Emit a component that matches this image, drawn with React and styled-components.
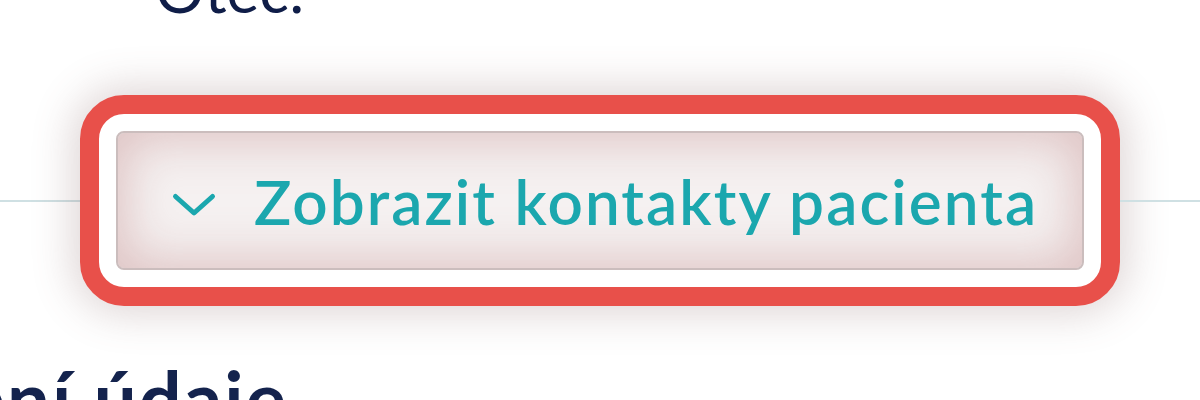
import React from 'react';
import styled, { createGlobalStyle } from 'styled-components';

const GlobalStyle = createGlobalStyle`
  html, body {
    margin: 0;
    padding: 0;
    background: #ffffff;
    overflow: hidden;
  }
  body {
    font-family: Lato, "Noto Sans", sans-serif;
  }
`;

const App = () => (
  <Page>
    <GlobalStyle />
    <FieldValue>Otec:</FieldValue>
    <DividerRow>
      <Rule />
      <FocusRing>
        <ToggleButton type="button">
          <Chevron width="46" height="26" viewBox="0 0 46 26" aria-hidden="true">
            <polyline points="4.5,4.5 23,21 41.5,4.5" />
          </Chevron>
          <ToggleLabel>Zobrazit kontakty pacienta</ToggleLabel>
        </ToggleButton>
      </FocusRing>
      <Rule />
    </DividerRow>
    <SectionTitle>Osobní údaje</SectionTitle>
  </Page>
);

export default App;

const Page = styled.div`
  width: 1200px;
  height: 400px;
  overflow: hidden;
  background: #ffffff;
`;

const FieldValue = styled.div`
  margin: -48px 0 0 155px;
  font-size: 62px;
  line-height: 1.2;
  font-weight: 400;
  color: #0f1d48;
`;

const DividerRow = styled.div`
  display: flex;
  align-items: center;
  margin-top: 69px;
`;

const Rule = styled.div`
  flex: 1;
  height: 2px;
  background: #cfe0e3;
`;

const FocusRing = styled.div`
  flex: none;
  padding: 17px;
  border: 19px solid #e8504a;
  border-radius: 44px;
  background: #ffffff;
  box-shadow: 0 0 40px 8px rgba(120, 85, 85, 0.24);
`;

const ToggleButton = styled.button`
  display: flex;
  align-items: center;
  gap: 37px;
  width: 968px;
  height: 139px;
  padding: 0 0 0 53px;
  border: 2px solid #cbbdbd;
  border-radius: 8px;
  background: #f5f1f1;
  box-shadow: inset 0 0 48px 8px rgba(196, 140, 140, 0.45);
  cursor: pointer;
  font-family: inherit;
`;

const Chevron = styled.svg`
  flex: none;
  fill: none;
  stroke: #1ba7ae;
  stroke-width: 5;
  stroke-linecap: round;
  stroke-linejoin: round;
  margin-top: 8px;
`;

const ToggleLabel = styled.span`
  font-size: 62px;
  font-weight: 600;
  letter-spacing: 2.1px;
  color: #1ba7ae;
  white-space: nowrap;
`;

const SectionTitle = styled.h2`
  margin: 46px 0 0 -182px;
  font-size: 76px;
  line-height: 1.2;
  font-weight: 700;
  letter-spacing: 2px;
  color: #14234d;
  white-space: nowrap;
`;
